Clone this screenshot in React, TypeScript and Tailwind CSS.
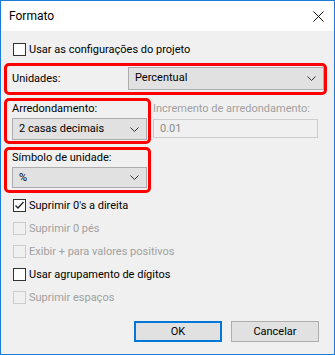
import React from "react";

const font = { fontFamily: 'Roboto, "Liberation Sans", sans-serif' };

function Chevron() {
  return (
    <svg width="9" height="5" viewBox="0 0 9 5" className="shrink-0">
      <path d="M0.5 0.5 L4.5 4.5 L8.5 0.5" fill="none" stroke="#333" strokeWidth="1" />
    </svg>
  );
}

function Select({ value, className }: { value: string; className: string }) {
  return (
    <div
      className={`flex items-center justify-between bg-[#e1e1e1] border border-[#adadad] pl-[6px] pr-[7px] text-black ${className}`}
    >
      <span>{value}</span>
      <Chevron />
    </div>
  );
}

function Check({
  label,
  checked = false,
  disabled = false,
}: {
  label: string;
  checked?: boolean;
  disabled?: boolean;
}) {
  return (
    <div className="flex items-center h-[23px] pl-[12px]">
      <div
        className={`w-[13px] h-[13px] border flex items-center justify-center shrink-0 ${
          disabled ? "border-[#cccccc] bg-[#f0f0f0]" : "border-[#333333] bg-white"
        }`}
      >
        {checked && (
          <svg width="11" height="11" viewBox="0 0 11 11">
            <path d="M1.5 5.5 L4 8 L9.5 2" fill="none" stroke="#222" strokeWidth="1.3" />
          </svg>
        )}
      </div>
      <span className={`ml-[3px] whitespace-nowrap ${disabled ? "text-[#a0a0a0]" : "text-black"}`}>{label}</span>
    </div>
  );
}

export default function App() {
  return (
    <div
      className="w-[335px] h-[355px] border border-[#1c7ad8] flex flex-col bg-[#f0f0f0] text-[11px] leading-[14px]"
      style={font}
    >
      <div className="h-[30px] bg-white flex items-center justify-between pl-[8px] pr-[10px] shrink-0">
        <span className="text-black text-[12px]">Formato</span>
        <svg width="11" height="11" viewBox="0 0 11 11">
          <path d="M0.5 0.5 L10.5 10.5 M10.5 0.5 L0.5 10.5" stroke="#111" strokeWidth="1" />
        </svg>
      </div>

      <div className="flex flex-col pt-[7px]">
        <Check label="Usar as configurações do projeto" />

        <div className="mt-[2px] ml-[3px] w-[323px] h-[32px] border-[3px] border-[#ff0000] rounded-[5px] flex items-center pl-[5px]">
          <span className="text-black">Unidades:</span>
          <Select value="Percentual" className="ml-auto w-[196px] h-[23px] mt-[-2px]" />
        </div>

        <div className="flex mt-[3px]">
          <div className="ml-[3px] w-[147px] h-[46px] border-[3px] border-[#ff0000] rounded-[5px] flex flex-col pl-[5px] pr-[1px] shrink-0">
            <span className="text-black mt-[1px] h-[14px]">Arredondamento:</span>
            <Select value="2 casas decimais" className="mt-[2px] h-[22px]" />
          </div>
          <div className="flex flex-col ml-[2px] pt-[4px]">
            <span className="text-[#a0a0a0] h-[14px] whitespace-nowrap">Incremento de arredondamento:</span>
            <div className="mt-[3px] w-[165px] h-[19px] border border-[#cccccc] bg-[#f0f0f0] flex items-center pl-[6px] text-[#8a8a8a]">
              0.01
            </div>
          </div>
        </div>

        <div className="mt-[3px] ml-[3px] w-[147px] h-[46px] border-[3px] border-[#ff0000] rounded-[5px] flex flex-col pl-[5px] pr-[1px]">
          <span className="text-black mt-[1px] h-[14px]">Símbolo de unidade:</span>
          <Select value="%" className="mt-[2px] h-[21px]" />
        </div>

        <div className="mt-[1px] flex flex-col">
          <Check label="Suprimir 0's a direita" checked />
          <Check label="Suprimir 0 pés" disabled />
          <Check label="Exibir + para valores positivos" disabled />
          <Check label="Usar agrupamento de dígitos" />
          <Check label="Suprimir espaços" disabled />
        </div>

        <div className="flex justify-end gap-[9px] pr-[15px] mt-[12px]">
          <div className="w-[88px] h-[21px] border-2 border-[#0078d7] bg-[#e1e1e1] flex items-center justify-center text-black">
            OK
          </div>
          <div className="w-[88px] h-[21px] border border-[#adadad] bg-[#e1e1e1] flex items-center justify-center text-black">
            Cancelar
          </div>
        </div>
      </div>
    </div>
  );
}
